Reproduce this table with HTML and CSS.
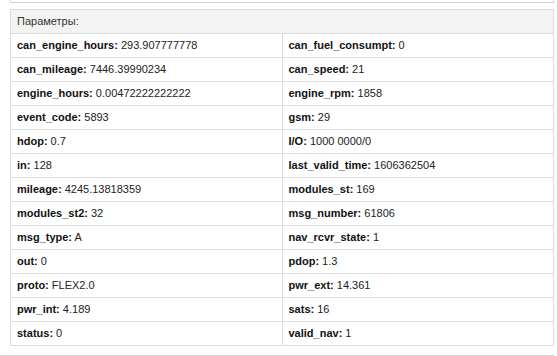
FILE: index.html
```html
<!DOCTYPE html>
<html>
<head>
<meta charset="utf-8">
<link rel="stylesheet" href="styles.css">
</head>
<body>
<div class="page">
  <div class="prev-box"></div>
  <table class="params">
    <thead>
      <tr><th colspan="2">Параметры:</th></tr>
    </thead>
    <tbody>
      <tr><td><b>can_engine_hours:</b> 293.907777778</td><td><b>can_fuel_consumpt:</b> 0</td></tr>
      <tr><td><b>can_mileage:</b> 7446.39990234</td><td><b>can_speed:</b> 21</td></tr>
      <tr><td><b>engine_hours:</b> 0.00472222222222</td><td><b>engine_rpm:</b> 1858</td></tr>
      <tr><td><b>event_code:</b> 5893</td><td><b>gsm:</b> 29</td></tr>
      <tr><td><b>hdop:</b> 0.7</td><td><b>I/O:</b> 1000 0000/0</td></tr>
      <tr><td><b>in:</b> 128</td><td><b>last_valid_time:</b> 1606362504</td></tr>
      <tr><td><b>mileage:</b> 4245.13818359</td><td><b>modules_st:</b> 169</td></tr>
      <tr><td><b>modules_st2:</b> 32</td><td><b>msg_number:</b> 61806</td></tr>
      <tr><td><b>msg_type:</b> A</td><td><b>nav_rcvr_state:</b> 1</td></tr>
      <tr><td><b>out:</b> 0</td><td><b>pdop:</b> 1.3</td></tr>
      <tr><td><b>proto:</b> FLEX2.0</td><td><b>pwr_ext:</b> 14.361</td></tr>
      <tr><td><b>pwr_int:</b> 4.189</td><td><b>sats:</b> 16</td></tr>
      <tr><td><b>status:</b> 0</td><td><b>valid_nav:</b> 1</td></tr>
    </tbody>
  </table>
  <div class="next-box"></div>
</div>
</body>
</html>
```
FILE: styles.css
```css
html, body {
  margin: 0;
  padding: 0;
  background: #fff;
}
body {
  font-family: "Liberation Sans", Arial, sans-serif;
  font-size: 11px;
  color: #222;
}
.page {
  width: 554px;
}
.prev-box {
  margin-left: 10px;
  height: 2px;
  border: 1px solid #d4d4d4;
  border-top: none;
}
.params {
  margin: 6px 0 0 10px;
  width: 544px;
  border-collapse: collapse;
  table-layout: fixed;
}
.params th,
.params td {
  border: 1px solid #dcdcdc;
  padding: 5px 6px;
  line-height: 13px;
  text-align: left;
  vertical-align: middle;
}
.params th {
  background: #f3f3f3;
  font-weight: normal;
  color: #333;
  font-size: 11px;
}
.params td b {
  color: #111;
  font-weight: bold;
}
.next-box {
  margin-top: 9px;
  height: 2px;
  border-top: 1px solid #d4d4d4;
}
```
